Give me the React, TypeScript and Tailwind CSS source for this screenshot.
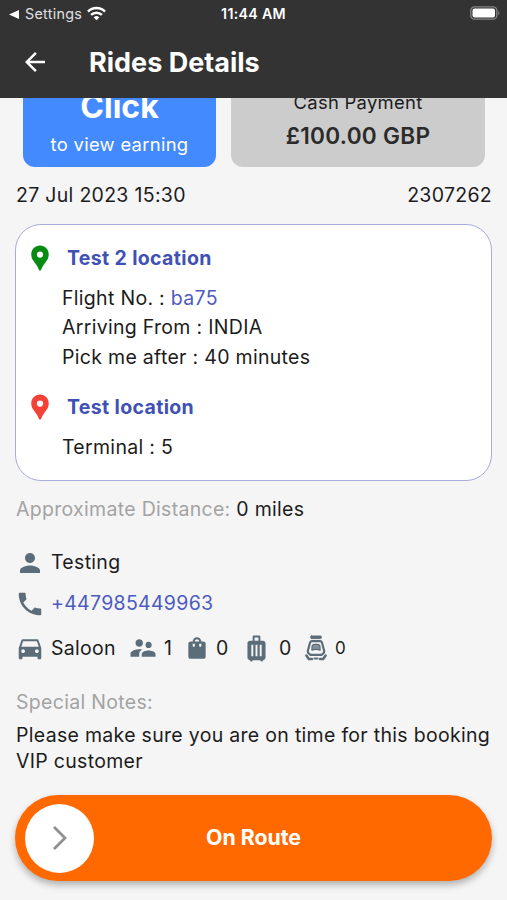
import type { IconType } from 'react-icons'
import {
  MdArrowBack, MdLocationPin, MdPerson, MdPhone, MdDirectionsCar,
  MdSupervisorAccount, MdShoppingBag, MdLuggage,
} from 'react-icons/md'

interface Detail {
  label: string
  value: string
  link?: boolean
}

interface Stop {
  name: string
  pin: string
  details: Detail[]
}

const stops: Stop[] = [
  {
    name: 'Test 2 location',
    pin: 'text-[#068c12]',
    details: [
      { label: 'Flight No.', value: 'ba75', link: true },
      { label: 'Arriving From', value: 'INDIA' },
      { label: 'Pick me after', value: '40 minutes' },
    ],
  },
  {
    name: 'Test location',
    pin: 'text-[#f44336]',
    details: [{ label: 'Terminal', value: '5' }],
  },
]

function StatusBar() {
  return (
    <div className="flex h-7 items-center justify-between pl-[9px] pr-[7px] text-white">
      <div className="flex w-[150px] items-center">
        <svg viewBox="0 0 10 9" className="h-[9px] w-[10px]" fill="currentColor">
          <path d="M10 0v9L0 4.5z" />
        </svg>
        <span className="ml-[6px] text-[14.3px] tracking-[0.3px] text-[#e0e0e0]">Settings</span>
        <svg viewBox="0 0 20 15" className="ml-[5px] mt-[-2px] h-[15px] w-[19px]" fill="none" stroke="currentColor" strokeWidth="2.6">
          <path d="M1 5.4a12.8 12.8 0 0 1 18 0" />
          <path d="M4.3 9a8.2 8.2 0 0 1 11.4 0" />
          <path d="M10 14.6 7 11.6a4.3 4.3 0 0 1 6 0z" fill="currentColor" stroke="none" />
        </svg>
      </div>
      <span className="mr-[2px] text-[14.2px] font-semibold">11:44 AM</span>
      <div className="flex w-[150px] justify-end">
        <svg viewBox="0 0 30 14" className="mt-[-2px] h-[14px] w-[30px]">
          <rect x="0.8" y="0.8" width="26" height="12.4" rx="3.6" fill="none" stroke="#858585" strokeWidth="1.3" />
          <rect x="2.5" y="2.4" width="22.5" height="9.2" rx="2" fill="#fff" />
          <path d="M28.3 4.8c1.6.8 1.6 3.6 0 4.4z" fill="#858585" />
        </svg>
      </div>
    </div>
  )
}

function CarSeatIcon({ className }: { className?: string }) {
  return (
    <svg viewBox="0 0 22 26" className={className} fill="none" stroke="currentColor" strokeLinejoin="round" strokeLinecap="round">
      <rect x="5.6" y="1" width="10.8" height="2.6" rx="1" fill="currentColor" strokeWidth="1" />
      <path d="M7 6.2h8c1 0 1.7.6 2 1.6l2.2 8.2c.2 1-.2 1.8-.9 2.4l-1.8 1.4h-11l-1.8-1.4c-.7-.6-1.1-1.4-.9-2.4L5 7.800c.3-1 1-1.6 2-1.6z" strokeWidth="2.2" />
      <path d="M6.900 15.200V12.400c0-1.900 1.200-3 2.700-3h2.800c1.500 0 2.700 1.100 2.700 3v2.800c-2.400-1-5.800-1-8.200 0z" fill="currentColor" fillOpacity="0.75" strokeWidth="1.1" />
      <path d="M1.400 20.600l2.400 3.300h3.200M20.600 20.600l-2.400 3.300h-3.200" strokeWidth="2.500" />
      <path d="M9.500 23.600h3" strokeWidth="2" />
    </svg>
  )
}

function ContactRow({ icon: Icon, children }: { icon: IconType; children: React.ReactNode }) {
  return (
    <div className="flex h-[41px] items-center gap-[6px]">
      <Icon className="size-[30px] text-[#5b6d78]" />
      {children}
    </div>
  )
}

export default function App() {
  return (
    <div className="flex h-[900px] w-[507px] flex-col overflow-hidden bg-[#f5f5f5] font-['Inter',sans-serif] text-[19.5px] tracking-[0.3px] text-[#1c1c1c]">
      {/* Header */}
      <header className="h-[98px] shrink-0 bg-[#333333] text-white">
        <StatusBar />
        <div className="flex h-[68px] items-center pl-[20px]">
          <MdArrowBack className="size-[30px]" />
          <h1 className="ml-[39px] pt-[3px] text-[27px] font-bold tracking-[0px]">Rides Details</h1>
        </div>
      </header>

      {/* Fare cards, scrolled partly under the header */}
      <div className="flex h-[69px] shrink-0 items-end gap-[15px] overflow-hidden pl-[23px] pr-[22px]">
        <div className="flex h-[100px] w-[193px] flex-col items-center justify-end rounded-xl bg-[#448aff] pb-[10px] text-white">
          <span className="text-[32px] font-bold leading-[34px] tracking-[0px]">Click</span>
          <span className="mt-[7px] text-[18.4px] leading-[26px]">to view earning</span>
        </div>
        <div className="flex h-[100px] flex-1 flex-col items-center justify-end rounded-xl bg-[#cccccc] pb-[18px]">
          <span className="text-[18.4px] leading-[26px]">Cash Payment</span>
          <span className="mt-[8px] text-[22.6px] font-semibold leading-[26px] text-[#2b2b2b]">£100.00 GBP</span>
        </div>
      </div>

      <main className="flex flex-1 flex-col px-4">
        <div className="mt-[15px] flex justify-between leading-[26px]">
          <span>27 Jul 2023 15:30</span>
          <span className="-mr-px">2307262</span>
        </div>

        {/* Pickup and drop-off */}
        <section className="-mx-px mt-4 flex h-[257px] flex-col gap-[20px] rounded-[26px] border border-[#a9abdc] bg-white pl-[9px] pt-[18px]">
          {stops.map(stop => (
            <div key={stop.name}>
              <div className="flex h-[30px] items-center">
                <MdLocationPin className={`size-[30px] ${stop.pin}`} />
                <span className="ml-3 pt-px font-bold tracking-[0.35px] text-[#3f51b5]">{stop.name}</span>
              </div>
              <div className="ml-[37px] mt-[11px]">
                {stop.details.map(d => (
                  <p key={d.label} className="leading-[29.3px]">
                    {d.label} : <span className={d.link ? 'text-[#4c5bc0]' : ''}>{d.value}</span>
                  </p>
                ))}
              </div>
            </div>
          ))}
        </section>

        <p className="mt-[15px] leading-[26px]">
          <span className="text-[#a3a3a3]">Approximate Distance:</span> 0 miles
        </p>

        {/* Passenger */}
        <div className="-ml-px mt-5">
          <ContactRow icon={MdPerson}>
            <span>Testing</span>
          </ContactRow>
          <ContactRow icon={MdPhone}>
            <span className="pt-px text-[#4c5bc0]">+447985449963</span>
          </ContactRow>
        </div>

        {/* Vehicle and luggage */}
        <div className="-ml-px mt-1 flex h-[40px] items-center">
          <MdDirectionsCar className="size-[30px] text-[#5b6d78]" />
          <span className="ml-[6px] w-[77px] pt-px">Saloon</span>
          <MdSupervisorAccount className="size-[30px] text-[#5b6d78]" />
          <span className="ml-[6px] w-[16px] pt-px">1</span>
          <MdShoppingBag className="ml-[4px] size-[26px] text-[#5b6d78]" />
          <span className="ml-[6px] w-[20px] pt-px">0</span>
          <MdLuggage className="ml-[5px] size-[31px] text-[#5b6d78]" />
          <span className="ml-[7px] w-[20px] pt-px">0</span>
          <CarSeatIcon className="ml-[6px] h-[26px] w-[22px] text-[#5b6d78]" />
          <span className="ml-[8px] pt-px text-[17px]">0</span>
        </div>

        <p className="mt-[21px] leading-[26px] text-[#a3a3a3]">Special Notes:</p>
        <p className="mt-[7px] whitespace-nowrap leading-[26px]">
          Please make sure you are on time for this booking
          <br />
          VIP customer
        </p>

        {/* Slide action */}
        <button className="-mx-px mt-[21px] flex h-[86px] items-center rounded-full bg-[#ff6900] pl-[10px] shadow-[0_4px_7px_rgba(0,0,0,0.28)]">
          <span className="flex size-[69px] items-center justify-center rounded-full bg-white">
            <svg viewBox="0 0 16 26" className="h-[26px] w-[16px]" fill="none" stroke="#8f8f8f" strokeWidth="2.8">
              <path d="M2 2l11 11L2 24" />
            </svg>
          </span>
          <span className="flex-1 pr-[79px] text-center text-[21.3px] font-bold tracking-[0px] text-white">On Route</span>
        </button>
      </main>
    </div>
  )
}
